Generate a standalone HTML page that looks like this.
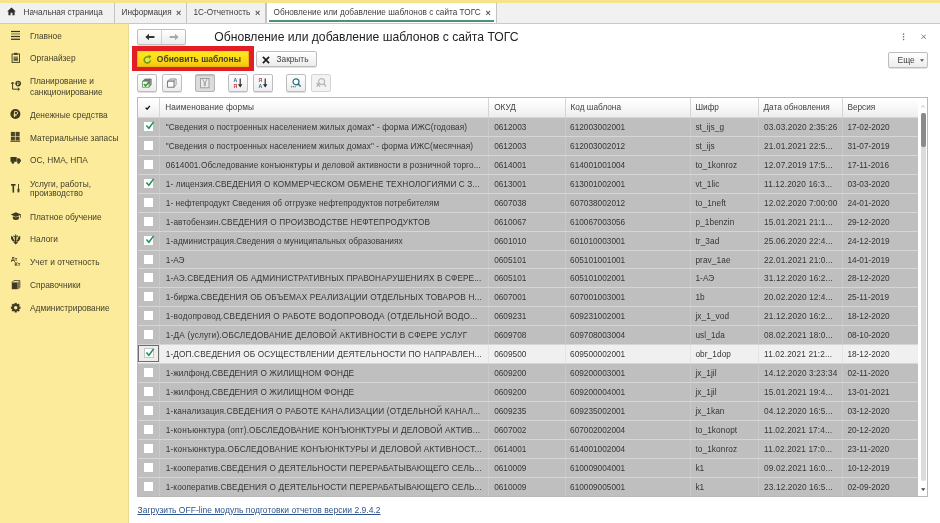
<!DOCTYPE html>
<html lang="ru">
<head>
<meta charset="utf-8">
<title>Обновление или добавление шаблонов с сайта ТОГС</title>
<style>
*{box-sizing:border-box;margin:0;padding:0}
html,body{width:940px;height:523px;overflow:hidden;background:#fff}
body{position:relative;font-family:"Liberation Sans",sans-serif;font-size:8.3px;color:#3a3a3a}
#app{position:absolute;left:0;top:0;width:940px;height:523px;overflow:hidden;will-change:transform}
.abs{position:absolute}
#topstrip{left:0;top:0;width:940px;height:3px;background:#f6e38d}
#tabbar{left:0;top:3px;width:940px;height:20.5px;background:#f1f1f1;border-bottom:1px solid #c9c9c9}
.tab{position:absolute;top:3px;height:20px;line-height:20.6px;font-size:8.2px;color:#3c3c3c;white-space:nowrap;border-right:1px solid #c4c4c4}
.tab .x{position:absolute;top:0;font-size:9px;font-weight:bold;color:#555}
#tab4{background:#fff;border-left:1px solid #c4c4c4;letter-spacing:0.045px}
#tab4 .ul{position:absolute;left:2px;right:2px;top:17px;height:1.6px;background:#4a9474}
#side{left:0;top:23px;width:128.5px;height:500px;background:#fbeb9b;border-top:1px solid #dccf8b;border-right:1px solid #e9dc92}
.si{position:absolute;left:30px;font-size:8.35px;color:#433f2a;white-space:nowrap;line-height:11.2px}
.ico{position:absolute;left:10px;width:12px;height:12px}
#title{left:214.3px;top:28.8px;font-size:12.15px;color:#222;white-space:nowrap;line-height:16px}
.btn{position:absolute;border:1px solid #bdbdbd;border-radius:2px;background:linear-gradient(#ffffff,#ececec);box-shadow:0 1px 0 rgba(0,0,0,.12)}
#redbox{left:132.2px;top:46px;width:121.6px;height:25.3px;background:#e41d24}
#upd{left:137px;top:51px;width:112.2px;height:16.2px;background:linear-gradient(#ffe822,#fbd414 70%,#f6c313);border:1px solid #eab90e;border-top-color:#f6d63a;border-radius:1px;font-size:8.5px;font-weight:bold;color:#444022;line-height:14px;white-space:nowrap}
#close{left:255.5px;top:51px;width:61px;height:16px;font-size:8.3px;line-height:14px;color:#444}
#more{left:888px;top:51.5px;width:39.6px;height:16px;font-size:8.5px;line-height:14px;color:#444}
.tb{position:absolute;top:74px;width:19.5px;height:17.5px;border:1px solid #bdbdbd;border-radius:2px;background:linear-gradient(#ffffff,#ececec);box-shadow:0 1px 0 rgba(0,0,0,.12)}
.tb.pressed{background:#dcdcdc;border-color:#b5b5b5;box-shadow:inset 0 1px 1px rgba(0,0,0,.15)}
.tb.dis{background:#f3f3f3;border-color:#d4d4d4;box-shadow:none}
.tb svg{position:absolute;left:3px;top:2px;width:12px;height:12px}
#table{left:137px;top:97px;width:791px;height:399.5px;border:1px solid #b9b9b9;background:#fff}
#thead{left:138px;top:98px;width:780px;height:19.5px;background:linear-gradient(#ffffff 10%,#ececec 100%)}
.th{position:absolute;top:98px;height:19.5px;line-height:19.5px;font-size:8.25px;color:#424242;white-space:nowrap;border-left:1px solid #d5d5d5;padding-left:5.5px}
.row{position:absolute;left:138px;width:780px;height:19px;background:#bfbfbf;border-top:1px solid #d6d6d6}
.row.sel{background:#f0f0f0}
.c{position:absolute;top:0;height:18px;line-height:19px;font-size:8.25px;color:#353535;white-space:nowrap;overflow:hidden;border-left:1px solid #c9c9c9;padding-left:5.5px}
.row.sel .c{border-left-color:#e4e4e4}
.c0{left:0;width:21px;border-left:none;padding:0}
.c1{left:21px;width:329px;padding-left:5.8px;letter-spacing:0.1px}
.c2{left:350px;width:77px;padding-left:5.2px}
.c3{left:427px;width:125px;padding-left:4.1px}
.c4{left:552px;width:68px;padding-left:4.4px;letter-spacing:0.1px}
.c5{left:620px;width:84px;padding-left:5.1px;letter-spacing:0.12px}
.c6{left:704px;width:76px;padding-left:4.4px}
.cb{position:absolute;left:6px;top:4px;width:9px;height:9px;background:#fff}
.row.sel .c0{border:1px solid #6e6e6e;height:17px;background:#ededed}
.row.sel .cb{left:5px;top:2px;width:10px;height:10px;border:1px solid #c6c6c6}
.row.sel .ck{left:0;top:-1.5px}
.ck{position:absolute;left:0.5px;top:-1.5px;width:10px;height:10px;overflow:visible}
#sbtrack{left:921px;top:113px;width:4.5px;height:368px;background:#dcdcdc;border-radius:2px}
#sbthumb{left:921px;top:113px;width:4.5px;height:34px;background:#8a8a8a;border-radius:2px}
#link{left:137.5px;top:504.5px;font-size:8.5px;letter-spacing:0.02px;color:#2d548c;text-decoration:underline;white-space:nowrap;line-height:11px}
</style>
</head>
<body>
<div id="app">
<div id="topstrip" class="abs"></div>
<div id="tabbar" class="abs"></div>
<div class="tab" id="tab1" style="left:0;width:114.5px;padding-left:23.5px">Начальная страница</div>
<div class="tab" id="tab2" style="left:114.5px;width:72px;padding-left:7px">Информация<span class="x" style="left:61.5px">×</span></div>
<div class="tab" id="tab3" style="left:186.5px;width:79.5px;padding-left:7px">1С-Отчетность<span class="x" style="left:68.5px">×</span></div>
<div class="tab" id="tab4" style="left:265.5px;width:231px;padding-left:7px">Обновление или добавление шаблонов с сайта ТОГС<span class="x" style="left:219px">×</span><span class="ul"></span></div>

<svg class="abs" style="left:7px;top:7.2px;width:9px;height:9px" viewBox="0 0 9 9"><path d="M0.2 4.6L4.5 0.4l4.3 4.2H7.6v3.7H5.4V5.8H3.6v2.5H1.4V4.6z" fill="#2e2e2e"/></svg>
<div id="side" class="abs"></div>
<div class="si" style="top:30.5px">Главное</div>
<div class="si" style="top:53px">Органайзер</div>
<div class="si" style="top:76.3px">Планирование и</div>
<div class="si" style="top:86.5px">санкционирование</div>
<div class="si" style="top:109.5px">Денежные средства</div>
<div class="si" style="top:132.6px">Материальные запасы</div>
<div class="si" style="top:154.5px">ОС, НМА, НПА</div>
<div class="si" style="top:178.6px">Услуги, работы,</div>
<div class="si" style="top:188.4px">производство</div>
<div class="si" style="top:211.7px">Платное обучение</div>
<div class="si" style="top:234.3px">Налоги</div>
<div class="si" style="top:257px">Учет и отчетность</div>
<div class="si" style="top:279.5px">Справочники</div>
<div class="si" style="top:302.9px">Администрирование</div>


<!-- sidebar icons -->
<svg class="ico" style="top:30px" viewBox="0 0 12 12"><g fill="#3a351f"><rect x="1" y="0.9" width="9" height="1.2"/><rect x="1" y="3.4" width="9" height="1.1" fill="#857d55"/><rect x="1" y="5.9" width="9" height="1.2"/><rect x="1" y="8.6" width="9" height="1.3"/></g></svg>
<svg class="ico" style="top:52px" viewBox="0 0 12 12"><rect x="2.1" y="2" width="7.4" height="8.4" fill="none" stroke="#4a4428" stroke-width="1"/><rect x="4.1" y="0.8" width="3.4" height="2.2" fill="#4a4428"/><rect x="3.6" y="4.6" width="4.4" height="4.2" fill="#5d573a"/><rect x="3.6" y="5.6" width="4.4" height="0.6" fill="#cfc586"/></svg>
<svg class="ico" style="top:80px" viewBox="0 0 12 12"><g stroke="#3f3a22" stroke-width="1" fill="none"><path d="M2.6 9.2V2.4M1.2 3.8L2.6 2l1.4 1.8M2.6 9.2h6.6M7.8 7.8l1.7 1.4-1.7 1.4"/></g><circle cx="8.2" cy="3.6" r="2.8" fill="#3f3a22"/><path d="M7.5 5.2V2.3h1a0.9 0.9 0 0 1 0 1.8h-1.4M7 4.6h1.6" stroke="#fbed9e" stroke-width="0.6" fill="none"/></svg>
<svg class="ico" style="top:108px" viewBox="0 0 12 12"><circle cx="5.4" cy="6" r="5" fill="#3f3a22"/><path d="M4.5 9V3.4h1.7a1.5 1.5 0 0 1 0 3H3.6M3.6 7.7h3" stroke="#f3e494" stroke-width="0.9" fill="none"/></svg>
<svg class="ico" style="top:131px" viewBox="0 0 12 12"><g fill="#4a4428"><rect x="0.9" y="0.9" width="4" height="4.1"/><rect x="5.6" y="0.9" width="4" height="4.1"/><rect x="0.9" y="5.6" width="4" height="3.9"/><rect x="5.6" y="5.6" width="4" height="3.9"/><rect x="0.4" y="9.8" width="9.8" height="1"/></g></svg>
<svg class="ico" style="top:155px" viewBox="0 0 12 12"><g fill="#3f3a22"><rect x="0.5" y="2" width="6.2" height="4.8"/><path d="M7.1 3.2h2.2l1.6 1.9v1.7H7.1z"/><circle cx="2.9" cy="7.4" r="1.35"/><circle cx="8.6" cy="7.4" r="1.35"/></g></svg>
<svg class="ico" style="top:183px" viewBox="0 0 12 12"><g fill="#3f3a22"><rect x="1" y="1" width="4.6" height="1.6"/><rect x="2.5" y="1" width="1.6" height="8.6"/><rect x="8" y="1" width="0.9" height="5"/><rect x="7.5" y="5.4" width="1.9" height="4.2" rx="0.8"/></g></svg>
<svg class="ico" style="top:211px" viewBox="0 0 12 12"><g fill="#3f3a22"><path d="M0.7 3.6L5.9 1.3l5.2 2.3-5.2 2.3z"/><path d="M2.9 5.2v2.9q3 1.7 6 0V5.2L5.9 6.6z"/><rect x="10.2" y="3.6" width="0.7" height="3.2"/></g></svg>
<svg class="ico" style="top:233px" viewBox="0 0 12 12"><g transform="translate(0.4 1)"><g fill="#3b361f"><path d="M1.2 1.6C0 4.4 1 6.9 3.6 7.8L4.6 6.5C3 5.6 2.3 4 2.8 2.3L2 2.9z"/><path d="M9.4 1.6C10.6 4.4 9.6 6.9 7 7.8L6 6.5C7.6 5.6 8.3 4 7.8 2.3l0.8 0.6z"/><rect x="4.6" y="1.4" width="1.4" height="7.6"/><path d="M5.3 0L6.1 1.6H4.5z"/><path d="M3.3 1.2l1.3 1.2v1.2L3 2.6zM7.3 1.2L6 2.4v1.2l1.6-1z"/><path d="M3 8.2l2.3 2.2 2.3-2.2-0.9-0.8-1.4 1.1-1.4-1.1z"/></g><g fill="#a9a693"><path d="M3.1 3.4l1.5 0.3v2.2L3.4 5.2z"/><path d="M7.5 3.4L6 3.7v2.2l1.2-0.7z"/></g></g></svg>
<div class="abs" style="left:11px;top:257.2px;font-size:5.4px;font-weight:bold;color:#3f3a22;line-height:4.6px;letter-spacing:-0.15px">Дт<br><span style="margin-left:3.6px">Кт</span></div>
<svg class="ico" style="top:279px" viewBox="0 0 12 12"><path d="M3.8 1.6h6v6.8l-1.6 1.6" fill="none" stroke="#4a4428" stroke-width="0.9"/><path d="M3.8 1.6L2 3.4" stroke="#4a4428" stroke-width="0.9"/><rect x="1.8" y="3.4" width="5.8" height="6.8" fill="#3f3a22"/><path d="M7.6 3.4l2-1.6v6.6l-2 1.8z" fill="#7a7350"/></svg>
<svg class="ico" style="top:302px" viewBox="0 0 12 12"><g transform="translate(5.7 5.7)"><g fill="#3f3a22"><rect x="-1.1" y="-4.8" width="2.2" height="9.6"/><rect x="-1.1" y="-4.8" width="2.2" height="9.6" transform="rotate(45)"/><rect x="-1.1" y="-4.8" width="2.2" height="9.6" transform="rotate(90)"/><rect x="-1.1" y="-4.8" width="2.2" height="9.6" transform="rotate(135)"/><circle r="3.6"/></g><circle r="1.7" fill="#fbed9e"/></g></svg>

<div class="btn" style="left:137.2px;top:29px;width:48.6px;height:15.5px"><span style="position:absolute;left:23.2px;top:0;width:1px;height:13.5px;background:#cfcfcf"></span>
<svg style="position:absolute;left:7px;top:3px;width:10px;height:8px" viewBox="0 0 10 8"><path d="M0.3 4L4 0.8v2.3h5.4v1.8H4v2.3z" fill="#333"/></svg>
<svg style="position:absolute;left:30.5px;top:3px;width:10px;height:8px" viewBox="0 0 10 8"><path d="M9.7 4L6 0.8v2.3H0.6v1.8H6v2.3z" fill="#a9a9a9"/></svg></div>
<div id="title" class="abs">Обновление или добавление шаблонов с сайта ТОГС</div>

<svg class="abs" style="left:902px;top:32.5px;width:3px;height:8px" viewBox="0 0 3 8"><g fill="#6a6a6a"><rect x="0.9" y="0.4" width="1.3" height="1.4"/><rect x="0.9" y="3.1" width="1.3" height="1.4"/><rect x="0.9" y="5.8" width="1.3" height="1.4"/></g></svg>
<svg class="abs" style="left:920.7px;top:33.7px;width:5.4px;height:5.4px" viewBox="0 0 6 6"><path d="M0.6 0.6L5.4 5.4M5.4 0.6L0.6 5.4" stroke="#7a7a7a" stroke-width="1.1"/></svg>
<div id="redbox" class="abs"></div>
<div id="upd" class="abs"><svg style="position:absolute;left:5.2px;top:3px;width:9px;height:9px" viewBox="0 0 9 9"><circle cx="4.3" cy="4.9" r="2.6" fill="#dcef45"/><path d="M7.4 5.2A3.1 3.1 0 1 1 5.6 2.1" fill="none" stroke="#6f9410" stroke-width="1.5"/><path d="M4.9 0.3L8.4 0.9 6.3 3.9z" fill="#6f9410"/></svg><span style="position:absolute;left:18.8px;top:0">Обновить шаблоны</span></div>
<div id="close" class="btn"><svg style="position:absolute;left:5.5px;top:3.5px;width:8px;height:8px" viewBox="0 0 8 8"><path d="M0.9 0.9L7.1 7.1M7.1 0.9L0.9 7.1" stroke="#1e1e1e" stroke-width="1.7"/></svg><span style="position:absolute;left:20px;top:0">Закрыть</span></div>
<div id="more" class="btn"><span style="position:absolute;left:8.5px;top:0">Еще</span><svg style="position:absolute;left:30.5px;top:6.5px;width:4px;height:3px" viewBox="0 0 4 3"><path d="M0 0.3h4L2 2.8z" fill="#555"/></svg></div>

<div class="tb" style="left:137px"><svg viewBox="0 0 12 12"><path d="M1.6 4.2L4 2h6.2v5.8L8 10.2" fill="#9a9a9a" stroke="#666" stroke-width="0.7"/><path d="M1.6 4.2L4 2h6.2L8 4.2z" fill="#777"/><rect x="1.6" y="4.2" width="6.4" height="6" fill="#f4fff4" stroke="#5c8a5c" stroke-width="0.8"/><path d="M2.8 7L4.6 8.9 8.4 4.4" fill="none" stroke="#2f9a2a" stroke-width="1.6"/></svg></div>
<div class="tb" style="left:162px"><svg viewBox="0 0 12 12"><path d="M1.6 4.2L4 2h6.2v5.8L8 10.2" fill="#e6e6e6" stroke="#8a8a8a" stroke-width="0.7"/><path d="M1.6 4.2L4 2h6.2L8 4.2z" fill="#d2d2d2" stroke="#8a8a8a" stroke-width="0.5"/><rect x="1.6" y="4.2" width="6.4" height="6" fill="#fff" stroke="#6a6a6a" stroke-width="0.9"/></svg></div>
<div class="tb pressed" style="left:195px"><svg viewBox="0 0 12 12"><rect x="1.6" y="1.4" width="8.4" height="9.4" fill="#ebebeb" stroke="#8e8e8e" stroke-width="0.8"/><path d="M3.6 2.2L5.2 5v3.6q0.6 0.6 1.2 0V5l1.6-2.8" fill="none" stroke="#8e8e8e" stroke-width="0.8"/></svg></div>
<div class="tb" style="left:228px"><svg viewBox="0 0 12 12"><text x="1.4" y="5.4" font-family="Liberation Sans" font-size="5.2" font-weight="bold" fill="#2e5f8e">А</text><text x="1.4" y="10.6" font-family="Liberation Sans" font-size="5.2" font-weight="bold" fill="#c23a3a">Я</text><path d="M8.2 1.6v6" stroke="#222" stroke-width="1.1"/><path d="M6 7.2h4.4L8.2 10.4z" fill="#222"/></svg></div>
<div class="tb" style="left:253px"><svg viewBox="0 0 12 12"><text x="1.4" y="5.4" font-family="Liberation Sans" font-size="5.2" font-weight="bold" fill="#c23a3a">Я</text><text x="1.4" y="10.6" font-family="Liberation Sans" font-size="5.2" font-weight="bold" fill="#2e5f8e">А</text><path d="M8.2 1.6v6" stroke="#222" stroke-width="1.1"/><path d="M6 7.2h4.4L8.2 10.4z" fill="#222"/></svg></div>
<div class="tb" style="left:286px"><svg viewBox="0 0 12 12"><circle cx="6" cy="4.8" r="3" fill="#fff" stroke="#2d6f86" stroke-width="1.2"/><path d="M8.2 7L10.6 9.6" stroke="#2d6f86" stroke-width="1.5"/><g fill="#2d6f86"><rect x="1" y="9.2" width="1.1" height="1.1"/><rect x="2.8" y="9.2" width="1.1" height="1.1"/><rect x="4.6" y="9.2" width="1.1" height="1.1"/></g></svg></div>
<div class="tb dis" style="left:311px"><svg viewBox="0 0 12 12"><circle cx="6.6" cy="4.6" r="3" fill="#f2f2f2" stroke="#b9b9b9" stroke-width="1.2"/><path d="M8.8 6.8L11 9.4" stroke="#b9b9b9" stroke-width="1.5"/><path d="M1.6 6L5 9.6M5 6L1.6 9.6" stroke="#b0b0b0" stroke-width="1.1"/></svg></div>

<div id="table" class="abs"></div>
<div id="thead" class="abs"></div>
<div class="th" style="left:138px;width:21px;border-left:none"></div>
<div class="th" style="left:159px;width:329px;padding-left:5.3px;letter-spacing:0.09px">Наименование формы</div>
<div class="th" style="left:488px;width:77px;padding-left:5.2px">ОКУД</div>
<div class="th" style="left:565px;width:125px;padding-left:4.5px">Код шаблона</div>
<div class="th" style="left:690px;width:68px;padding-left:4.4px">Шифр</div>
<div class="th" style="left:758px;width:84px;padding-left:4.5px">Дата обновления</div>
<div class="th" style="left:842px;width:76px;padding-left:4.4px">Версия</div>
<svg class="abs" style="left:145.2px;top:104.6px;width:5.4px;height:5.4px" viewBox="0 0 6 6"><path d="M0.7 2.9L2.4 4.7 5.4 1" fill="none" stroke="#111" stroke-width="1.5"/></svg>
<svg class="abs" style="left:921px;top:104.5px;width:4px;height:3px" viewBox="0 0 4 3"><path d="M0.3 2.6L2 0.6l1.7 2" fill="none" stroke="#b5b5b5" stroke-width="0.8"/></svg>
<svg class="abs" style="left:921px;top:487.5px;width:4.4px;height:3px" viewBox="0 0 4.4 3"><path d="M0 0.2h4.4L2.2 2.9z" fill="#444"/></svg>
<div class="row" style="top:117px;height:19px"><div class="c c0"><span class="cb"><svg class="ck" viewBox="0 0 10 10"><path d="M1.4 4.4 L3.9 7.2 L8.6 0.9" fill="none" stroke="#1d8f52" stroke-width="1.5"/></svg></span></div><div class="c c1" style="letter-spacing:0.087px">"Сведения о построенных населением жилых домах" - форма ИЖС(годовая)</div><div class="c c2">0612003</div><div class="c c3">612003002001</div><div class="c c4">st_ijs_g</div><div class="c c5">03.03.2020 2:35:26</div><div class="c c6">17-02-2020</div></div>
<div class="row" style="top:136px;height:19px"><div class="c c0"><span class="cb"></span></div><div class="c c1" style="letter-spacing:0.074px">"Сведения о построенных населением жилых домах" - форма ИЖС(месячная)</div><div class="c c2">0612003</div><div class="c c3">612003002012</div><div class="c c4">st_ijs</div><div class="c c5">21.01.2021 22:5...</div><div class="c c6">31-07-2019</div></div>
<div class="row" style="top:155px;height:19px"><div class="c c0"><span class="cb"></span></div><div class="c c1" style="letter-spacing:0.084px">0614001.Обследование конъюнктуры и деловой активности в розничной торго...</div><div class="c c2">0614001</div><div class="c c3">614001001004</div><div class="c c4">to_1konroz</div><div class="c c5">12.07.2019 17:5...</div><div class="c c6">17-11-2016</div></div>
<div class="row" style="top:174px;height:19px"><div class="c c0"><span class="cb"><svg class="ck" viewBox="0 0 10 10"><path d="M1.4 4.4 L3.9 7.2 L8.6 0.9" fill="none" stroke="#1d8f52" stroke-width="1.5"/></svg></span></div><div class="c c1" style="letter-spacing:0.098px">1- лицензия.СВЕДЕНИЯ О КОММЕРЧЕСКОМ ОБМЕНЕ ТЕХНОЛОГИЯМИ С З...</div><div class="c c2">0613001</div><div class="c c3">613001002001</div><div class="c c4">vt_1lic</div><div class="c c5">11.12.2020 16:3...</div><div class="c c6">03-03-2020</div></div>
<div class="row" style="top:193px;height:19px"><div class="c c0"><span class="cb"></span></div><div class="c c1" style="letter-spacing:0.042px">1- нефтепродукт Сведения об отгрузке нефтепродуктов потребителям</div><div class="c c2">0607038</div><div class="c c3">607038002012</div><div class="c c4">to_1neft</div><div class="c c5">12.02.2020 7:00:00</div><div class="c c6">24-01-2020</div></div>
<div class="row" style="top:212px;height:19px"><div class="c c0"><span class="cb"></span></div><div class="c c1" style="letter-spacing:0.131px">1-автобензин.СВЕДЕНИЯ О ПРОИЗВОДСТВЕ НЕФТЕПРОДУКТОВ</div><div class="c c2">0610067</div><div class="c c3">610067003056</div><div class="c c4">p_1benzin</div><div class="c c5">15.01.2021 21:1...</div><div class="c c6">29-12-2020</div></div>
<div class="row" style="top:231px;height:19px"><div class="c c0"><span class="cb"><svg class="ck" viewBox="0 0 10 10"><path d="M1.4 4.4 L3.9 7.2 L8.6 0.9" fill="none" stroke="#1d8f52" stroke-width="1.5"/></svg></span></div><div class="c c1" style="letter-spacing:0.074px">1-администрация.Сведения о муниципальных образованиях</div><div class="c c2">0601010</div><div class="c c3">601010003001</div><div class="c c4">tr_3ad</div><div class="c c5">25.06.2020 22:4...</div><div class="c c6">24-12-2019</div></div>
<div class="row" style="top:250px;height:18px"><div class="c c0"><span class="cb"></span></div><div class="c c1" style="letter-spacing:0.0px">1-АЭ</div><div class="c c2">0605101</div><div class="c c3">605101001001</div><div class="c c4">prav_1ae</div><div class="c c5">22.01.2021 21:0...</div><div class="c c6">14-01-2019</div></div>
<div class="row" style="top:268px;height:19px"><div class="c c0"><span class="cb"></span></div><div class="c c1" style="letter-spacing:0.102px">1-АЭ.СВЕДЕНИЯ ОБ АДМИНИСТРАТИВНЫХ ПРАВОНАРУШЕНИЯХ В СФЕРЕ...</div><div class="c c2">0605101</div><div class="c c3">605101002001</div><div class="c c4">1-АЭ</div><div class="c c5">31.12.2020 16:2...</div><div class="c c6">28-12-2020</div></div>
<div class="row" style="top:287px;height:19px"><div class="c c0"><span class="cb"></span></div><div class="c c1" style="letter-spacing:0.151px">1-биржа.СВЕДЕНИЯ ОБ ОБЪЕМАХ РЕАЛИЗАЦИИ ОТДЕЛЬНЫХ ТОВАРОВ Н...</div><div class="c c2">0607001</div><div class="c c3">607001003001</div><div class="c c4">1b</div><div class="c c5">20.02.2020 12:4...</div><div class="c c6">25-11-2019</div></div>
<div class="row" style="top:306px;height:19px"><div class="c c0"><span class="cb"></span></div><div class="c c1" style="letter-spacing:0.2px">1-водопровод.СВЕДЕНИЯ О РАБОТЕ ВОДОПРОВОДА (ОТДЕЛЬНОЙ ВОДО...</div><div class="c c2">0609231</div><div class="c c3">609231002001</div><div class="c c4">jx_1_vod</div><div class="c c5">21.12.2020 16:2...</div><div class="c c6">18-12-2020</div></div>
<div class="row" style="top:325px;height:19px"><div class="c c0"><span class="cb"></span></div><div class="c c1" style="letter-spacing:0.2px">1-ДА (услуги).ОБСЛЕДОВАНИЕ ДЕЛОВОЙ АКТИВНОСТИ В СФЕРЕ УСЛУГ</div><div class="c c2">0609708</div><div class="c c3">609708003004</div><div class="c c4">usl_1da</div><div class="c c5">08.02.2021 18:0...</div><div class="c c6">08-10-2020</div></div>
<div class="row sel" style="top:344px;height:19px"><div class="c c0"><span class="cb"><svg class="ck" viewBox="0 0 10 10"><path d="M1.4 4.4 L3.9 7.2 L8.6 0.9" fill="none" stroke="#1d8f52" stroke-width="1.5"/></svg></span></div><div class="c c1" style="letter-spacing:0.118px">1-ДОП.СВЕДЕНИЯ ОБ ОСУЩЕСТВЛЕНИИ ДЕЯТЕЛЬНОСТИ ПО НАПРАВЛЕН...</div><div class="c c2">0609500</div><div class="c c3">609500002001</div><div class="c c4">obr_1dop</div><div class="c c5">11.02.2021 21:2...</div><div class="c c6">18-12-2020</div></div>
<div class="row" style="top:363px;height:19px"><div class="c c0"><span class="cb"></span></div><div class="c c1" style="letter-spacing:0.063px">1-жилфонд.СВЕДЕНИЯ О ЖИЛИЩНОМ ФОНДЕ</div><div class="c c2">0609200</div><div class="c c3">609200003001</div><div class="c c4">jx_1jil</div><div class="c c5">14.12.2020 3:23:34</div><div class="c c6">02-11-2020</div></div>
<div class="row" style="top:382px;height:19px"><div class="c c0"><span class="cb"></span></div><div class="c c1" style="letter-spacing:0.063px">1-жилфонд.СВЕДЕНИЯ О ЖИЛИЩНОМ ФОНДЕ</div><div class="c c2">0609200</div><div class="c c3">609200004001</div><div class="c c4">jx_1jil</div><div class="c c5">15.01.2021 19:4...</div><div class="c c6">13-01-2021</div></div>
<div class="row" style="top:401px;height:19px"><div class="c c0"><span class="cb"></span></div><div class="c c1" style="letter-spacing:0.144px">1-канализация.СВЕДЕНИЯ О РАБОТЕ КАНАЛИЗАЦИИ (ОТДЕЛЬНОЙ КАНАЛ...</div><div class="c c2">0609235</div><div class="c c3">609235002001</div><div class="c c4">jx_1kan</div><div class="c c5">04.12.2020 16:5...</div><div class="c c6">03-12-2020</div></div>
<div class="row" style="top:420px;height:19px"><div class="c c0"><span class="cb"></span></div><div class="c c1" style="letter-spacing:0.176px">1-конъюнктура (опт).ОБСЛЕДОВАНИЕ КОНЪЮНКТУРЫ И ДЕЛОВОЙ АКТИВ...</div><div class="c c2">0607002</div><div class="c c3">607002002004</div><div class="c c4">to_1konopt</div><div class="c c5">11.02.2021 17:4...</div><div class="c c6">20-12-2020</div></div>
<div class="row" style="top:439px;height:19px"><div class="c c0"><span class="cb"></span></div><div class="c c1" style="letter-spacing:0.184px">1-конъюнктура.ОБСЛЕДОВАНИЕ КОНЪЮНКТУРЫ И ДЕЛОВОЙ АКТИВНОСТ...</div><div class="c c2">0614001</div><div class="c c3">614001002004</div><div class="c c4">to_1konroz</div><div class="c c5">11.02.2021 17:0...</div><div class="c c6">23-11-2020</div></div>
<div class="row" style="top:458px;height:19px"><div class="c c0"><span class="cb"></span></div><div class="c c1" style="letter-spacing:0.102px">1-кооператив.СВЕДЕНИЯ О ДЕЯТЕЛЬНОСТИ ПЕРЕРАБАТЫВАЮЩЕГО СЕЛЬ...</div><div class="c c2">0610009</div><div class="c c3">610009004001</div><div class="c c4">k1</div><div class="c c5">09.02.2021 16:0...</div><div class="c c6">10-12-2019</div></div>
<div class="row" style="top:477px;height:19px"><div class="c c0"><span class="cb"></span></div><div class="c c1" style="letter-spacing:0.102px">1-кооператив.СВЕДЕНИЯ О ДЕЯТЕЛЬНОСТИ ПЕРЕРАБАТЫВАЮЩЕГО СЕЛЬ...</div><div class="c c2">0610009</div><div class="c c3">610009005001</div><div class="c c4">k1</div><div class="c c5">23.12.2020 16:5...</div><div class="c c6">02-09-2020</div></div>
<div id="sbtrack" class="abs"></div>
<div id="sbthumb" class="abs"></div>
<div id="link" class="abs">Загрузить OFF-line модуль подготовки отчетов версии 2.9.4.2</div>
</div>
</body>
</html>
